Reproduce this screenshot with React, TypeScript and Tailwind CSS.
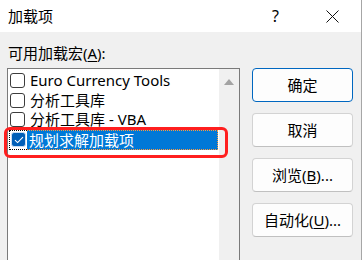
import { Fragment } from 'react'

const font = { fontFamily: '"Segoe UI", "Noto Sans", "Noto Sans CJK SC", sans-serif' }

type Item = { label: string; checked: boolean; selected?: boolean }

const items: Item[] = [
  { label: 'Euro Currency Tools', checked: false },
  { label: '分析工具库', checked: false },
  { label: '分析工具库 - VBA', checked: false },
  { label: '规划求解加载项', checked: true, selected: true },
]

function Mnemonic({ before, letter, after }: { before: string; letter: string; after: string }) {
  return (
    <Fragment>
      {before}
      <span className="underline underline-offset-2">{letter}</span>
      {after}
    </Fragment>
  )
}

function CheckBox({ checked }: { checked: boolean }) {
  if (checked) {
    return (
      <span className="w-[15px] h-[15px] rounded-[3px] bg-[#005fb8] border border-[#c9dcf0] flex items-center justify-center shrink-0">
        <svg width="10" height="8" viewBox="0 0 10 8" fill="none">
          <path d="M1 4.2 L3.6 6.6 L9 1.2" stroke="#fff" strokeWidth="1.1" />
        </svg>
      </span>
    )
  }
  return <span className="w-[15px] h-[15px] rounded-[3px] border border-[#3c3c3c] bg-white shrink-0" />
}

function Row({ item }: { item: Item }) {
  if (item.selected) {
    return (
      <div className="flex items-stretch h-[20px] ml-[1px] mr-[1px] shrink-0">
        <div className="flex items-center pl-[1px] pr-[1px] border-y border-l border-dotted border-black">
          <CheckBox checked={item.checked} />
        </div>
        <span className="flex-1 flex items-center bg-[#0078d7] text-white pl-[2px] text-[15px] leading-[18px] whitespace-nowrap border-y border-r border-dotted border-[#ff9a3c]">
          {item.label}
        </span>
      </div>
    )
  }
  return (
    <div className="flex items-center h-[19.5px] pl-[2px] shrink-0">
      <CheckBox checked={item.checked} />
      <span className="pl-[5px] text-[15px] leading-[19px] text-black whitespace-nowrap">{item.label}</span>
    </div>
  )
}

function DialogButton({ children, primary }: { children: React.ReactNode; primary?: boolean }) {
  return (
    <button
      type="button"
      className={`h-[34px] w-[101px] shrink-0 rounded-[4px] bg-[#fdfdfd] text-[15px] leading-[20px] text-black flex items-center justify-center border ${
        primary ? 'border-[#0067c0]' : 'border-[#d3d3d3] border-b-[#c0c0c0]'
      }`}
    >
      {children}
    </button>
  )
}

export default function App() {
  return (
    <div className="relative w-[363px] h-[260px] overflow-hidden bg-white" style={font}>
      <div className="w-[362px] h-full border-r border-[#a6a6a6] flex flex-col">
        {/* Title bar */}
        <div className="h-[32px] shrink-0 bg-white flex items-center">
          <span className="flex-1 pl-[8px] text-[15px] leading-[20px] text-black">加载项</span>
          <span className="w-[57px] text-center text-[16px] leading-[20px] text-black">?</span>
          <span className="w-[57px] flex items-center justify-center">
            <svg width="13" height="13" viewBox="0 0 13 13">
              <path d="M0.5 0.5 L12.5 12.5 M12.5 0.5 L0.5 12.5" stroke="#111" strokeWidth="1" />
            </svg>
          </span>
        </div>

        {/* Body */}
        <div className="flex-1 min-h-0 overflow-hidden bg-[#f0f0f0] flex flex-col">
          <p className="shrink-0 pt-[11px] pl-[8px] h-[31px] text-[15px] leading-[20px] text-black">
            <Mnemonic before="可用加载宏(" letter="A" after="):" />
          </p>
          <div className="flex shrink-0 mt-[5px]">
            <div className="ml-[7px] w-[233px] h-[200px] shrink-0 border border-[#7a7a7a] bg-white flex">
              <div className="flex-1 pt-[2px] flex flex-col">
                {items.map((item) => (
                  <Row key={item.label} item={item} />
                ))}
              </div>
              <div className="w-[20px] bg-[#f0f0f0] flex justify-center pt-[10px]">
                <svg width="10" height="6" viewBox="0 0 10 6">
                  <path d="M5 0 L10 6 L0 6 Z" fill="#a3a3a3" />
                </svg>
              </div>
            </div>
            <div className="ml-[12px] flex flex-col gap-[11px]">
              <DialogButton primary>确定</DialogButton>
              <DialogButton>取消</DialogButton>
              <DialogButton>
                <Mnemonic before="浏览(" letter="B" after=")..." />
              </DialogButton>
              <DialogButton>
                <Mnemonic before="自动化(" letter="U" after=")..." />
              </DialogButton>
            </div>
          </div>
        </div>
      </div>

      {/* red highlight annotation */}
      <div className="absolute left-[4px] top-[127px] w-[224px] h-[31px] border-[3.5px] border-[#ff1f1f] rounded-[6px] pointer-events-none" />
    </div>
  )
}
